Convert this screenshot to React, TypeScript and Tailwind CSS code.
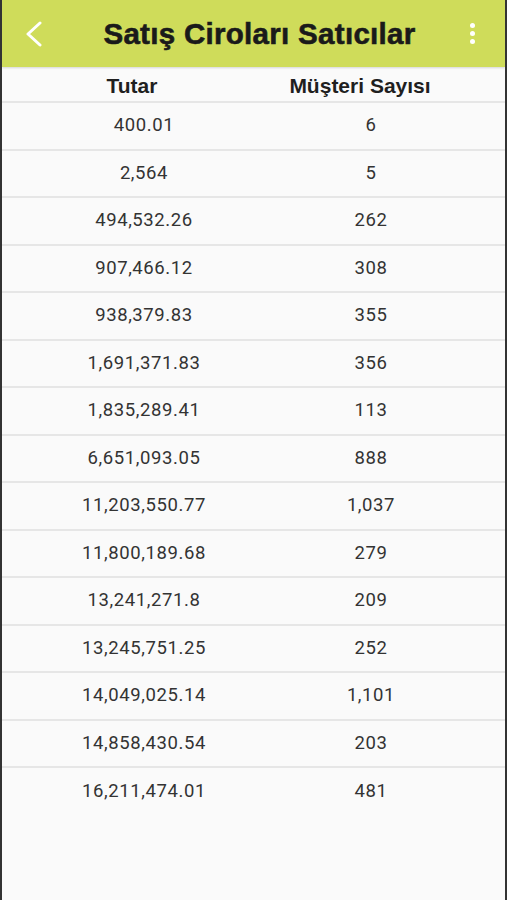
const rows: [string, string][] = [
  ["400.01", "6"],
  ["2,564", "5"],
  ["494,532.26", "262"],
  ["907,466.12", "308"],
  ["938,379.83", "355"],
  ["1,691,371.83", "356"],
  ["1,835,289.41", "113"],
  ["6,651,093.05", "888"],
  ["11,203,550.77", "1,037"],
  ["11,800,189.68", "279"],
  ["13,241,271.8", "209"],
  ["13,245,751.25", "252"],
  ["14,049,025.14", "1,101"],
  ["14,858,430.54", "203"],
  ["16,211,474.01", "481"],
];

export default function App() {
  return (
    <div className="h-[900px] w-[507px] bg-[#fafafa] border-l-2 border-r-2 border-[#333] flex flex-col overflow-hidden">
      {/* toolbar */}
      <div className="h-[67px] bg-[#cfdc5a] flex items-center shrink-0 shadow-[0_1px_2px_rgba(0,0,0,0.15)]">
        <div className="w-[60px] flex items-center pl-[22px]">
          <svg width="20" height="26" viewBox="0 0 20 26" fill="none">
            <path d="M16 2 L4 13 L16 24" stroke="white" strokeWidth="3" strokeLinecap="round" strokeLinejoin="round" />
          </svg>
        </div>
        <h1 className="flex-1 text-center text-[29.5px] font-bold text-[#1a1a1a] font-['Liberation_Sans',Arial,sans-serif] tracking-[0.3px] pt-[1px] pl-[12px] [-webkit-text-stroke:0.6px_#1a1a1a]">
          Satış Ciroları Satıcılar
        </h1>
        <div className="w-[60px] flex flex-col items-center gap-[3px] pr-[6px]">
          <span className="block w-[5px] h-[5px] rounded-full bg-white" />
          <span className="block w-[5px] h-[5px] rounded-full bg-white" />
          <span className="block w-[5px] h-[5px] rounded-full bg-white" />
        </div>
      </div>

      {/* header row */}
      <div className="h-[36px] flex items-center border-b-2 border-[#e6e6e6] font-['Liberation_Sans',Arial,sans-serif] font-bold text-[21px] text-[#1f1f1f]">
        <div className="w-[260px] text-center pt-[3px]">Tutar</div>
        <div className="w-[196px] text-center pt-[3px]">Müşteri Sayısı</div>
      </div>

      {rows.map(([amount, count], i) => (
        <div
          key={i}
          className={`h-[47.5px] flex items-center text-[18.5px] text-[#333] font-['Roboto',sans-serif] tracking-[0.6px] pt-[1px] ${i < rows.length - 1 ? "border-b-2 border-[#e6e6e6]" : ""}`}
        >
          <div className="w-[284px] text-center">{amount}</div>
          <div className="w-[170px] text-center">{count}</div>
        </div>
      ))}
    </div>
  );
}
